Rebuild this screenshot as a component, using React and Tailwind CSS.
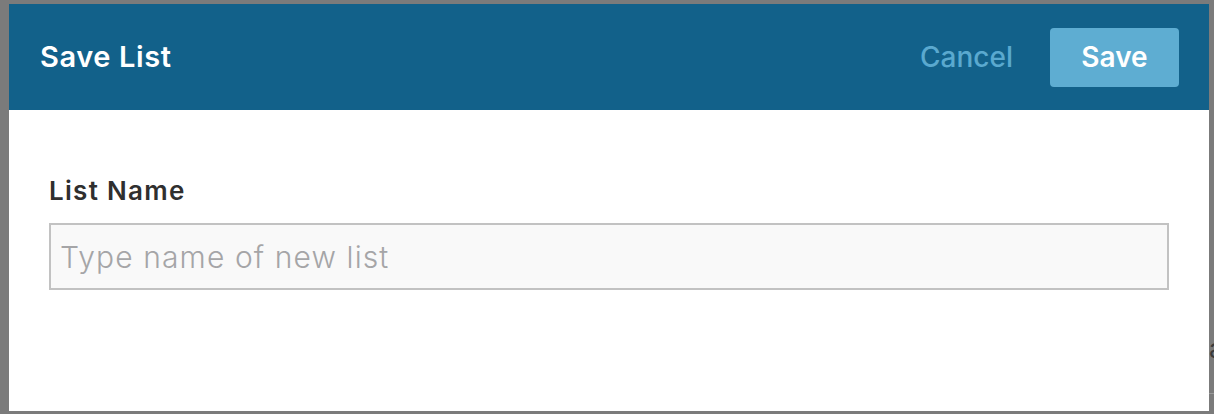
import React from 'react';

const App = () => {
  return (
    <div
      className="w-[1214px] h-[414px] bg-[#7b7b7b] pt-[4px] pl-[9px] overflow-hidden relative"
      style={{ fontFamily: 'Inter, "Noto Sans", sans-serif' }}
    >
      {/* bits of the page behind the dialog */}
      <div className="absolute left-[1209px] top-[336px] text-[26px] text-[#3a3a3a] leading-none">a</div>
      <div className="absolute left-[1209px] top-[393px] w-[5px] h-[1px] bg-[#9a9a9a]"></div>

      <div className="w-[1200px] h-[407px] bg-white flex flex-col">
        {/* Header */}
        <div className="h-[106px] bg-[#12618a] flex items-center justify-between pl-[31px] pr-[30px]">
          <h1 className="text-[29px] font-semibold text-white tracking-[0.6px]">Save List</h1>
          <div className="flex items-center gap-[37px]">
            <button className="text-[28px] font-medium text-[#5aa9cf]">Cancel</button>
            <button className="w-[129px] h-[59px] rounded-[4px] bg-[#5eadd2] text-white text-[28px] font-semibold">
              Save
            </button>
          </div>
        </div>

        {/* Body */}
        <div className="pt-[68px] pl-[40px] pr-[40px]">
          <label className="block text-[26px] font-semibold text-[#2f2f2f] leading-none mb-[19px] tracking-[1.3px]">List Name</label>
          <input
            type="text"
            placeholder="Type name of new list"
            className="w-[1120px] h-[67px] border-2 border-[#c2c2c2] bg-[#f9f9f9] px-[9px] text-[30px] font-light tracking-[1.1px] text-[#333] placeholder:text-[#a5a5a7] outline-none"
          />
        </div>
      </div>
    </div>
  );
};

export default App;
